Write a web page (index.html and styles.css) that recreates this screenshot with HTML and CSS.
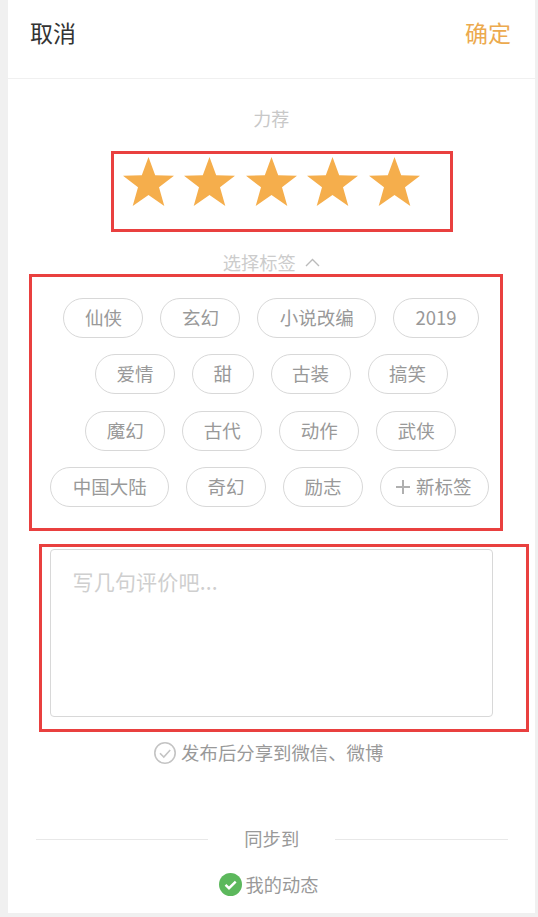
FILE: index.html
```html
<!DOCTYPE html>
<html lang="zh-CN">
<head>
<meta charset="utf-8">
<title>力荐</title>
<link rel="stylesheet" href="styles.css">
</head>
<body>
<main class="card">
  <header class="topbar">
    <span class="cancel">取消</span>
    <span class="confirm">确定</span>
  </header>
  <p class="rating-label">力荐</p>
  <div class="stars">
    <svg class="star" viewBox="0 0 51 49"><path d="M25.5 0L32.2 18.2 51 18.7 36 30.3 41.3 49 25.5 38 9.7 49 15 30.3 0 18.7 18.8 18.2z"/></svg>
    <svg class="star" viewBox="0 0 51 49"><path d="M25.5 0L32.2 18.2 51 18.7 36 30.3 41.3 49 25.5 38 9.7 49 15 30.3 0 18.7 18.8 18.2z"/></svg>
    <svg class="star" viewBox="0 0 51 49"><path d="M25.5 0L32.2 18.2 51 18.7 36 30.3 41.3 49 25.5 38 9.7 49 15 30.3 0 18.7 18.8 18.2z"/></svg>
    <svg class="star" viewBox="0 0 51 49"><path d="M25.5 0L32.2 18.2 51 18.7 36 30.3 41.3 49 25.5 38 9.7 49 15 30.3 0 18.7 18.8 18.2z"/></svg>
    <svg class="star" viewBox="0 0 51 49"><path d="M25.5 0L32.2 18.2 51 18.7 36 30.3 41.3 49 25.5 38 9.7 49 15 30.3 0 18.7 18.8 18.2z"/></svg>
  </div>
  <div class="tag-toggle">
    <span>选择标签</span>
    <svg class="chevron" viewBox="0 0 15 9"><path d="M1 8L7.5 1.5 14 8"/></svg>
  </div>
  <section class="tags">
    <div class="tag-row">
      <span class="tag">仙侠</span><span class="tag">玄幻</span><span class="tag tag-wide">小说改编</span><span class="tag tag-year">2019</span>
    </div>
    <div class="tag-row">
      <span class="tag">爱情</span><span class="tag">甜</span><span class="tag">古装</span><span class="tag">搞笑</span>
    </div>
    <div class="tag-row tag-row-third">
      <span class="tag">魔幻</span><span class="tag">古代</span><span class="tag">动作</span><span class="tag">武侠</span>
    </div>
    <div class="tag-row tag-row-last">
      <span class="tag tag-wide">中国大陆</span><span class="tag">奇幻</span><span class="tag">励志</span>
      <span class="tag tag-new"><svg class="plus" viewBox="0 0 14 14"><path d="M7 0V14M0 7H14"/></svg>新标签</span>
    </div>
  </section>
  <div class="comment">写几句评价吧...</div>
  <div class="share">
    <svg class="tick" viewBox="0 0 22 22"><circle cx="11" cy="11" r="10.2"/><path d="M6 11.2L9.8 15 16.2 8"/></svg>
    <span class="row-text">发布后分享到微信、微博</span>
  </div>
  <div class="sync-title"><span class="rule"></span><span class="sync-text">同步到</span><span class="rule"></span></div>
  <div class="sync-target">
    <svg class="tick-on" viewBox="0 0 23 23"><circle cx="11.5" cy="11.5" r="11.5"/><path d="M6.5 11.8L10 15.2 16.7 8.6"/></svg>
    <span class="row-text">我的动态</span>
  </div>
</main>
<div class="mark mark-stars"></div>
<div class="mark mark-tags"></div>
<div class="mark mark-comment"></div>
</body>
</html>
```
FILE: styles.css
```css
* { box-sizing: border-box; }
html, body { margin: 0; padding: 0; }
body {
  position: relative;
  width: 538px;
  height: 917px;
  overflow: hidden;
  background: #f0f0f0;
  font-family: "Noto Sans CJK SC", "Noto Sans", sans-serif;
  color: #999;
}
.card {
  width: 526.5px;
  height: 913px;
  margin-left: 8px;
  background: #fff;
  overflow: hidden;
}
.topbar {
  display: flex;
  justify-content: space-between;
  align-items: center;
  height: 79px;
  padding: 0 23.5px 14px 22px;
  border-bottom: 1px solid #f0f0f0;
  font-size: 23px;
  line-height: 34px;
}
.cancel { color: #333; }
.confirm { color: #ecaa4e; }
.rating-label {
  margin: 26px 0 0;
  font-size: 18px;
  line-height: 26px;
  text-align: center;
  color: #c8c8c8;
}
.stars {
  display: flex;
  gap: 10.4px;
  margin: 26px 0 0 115px;
}
.star { width: 51px; height: 49px; flex: none; }
.star path { fill: #f5ae4c; }
.tag-toggle {
  display: flex;
  justify-content: center;
  align-items: center;
  gap: 8px;
  margin: 43px 0 0;
  font-size: 18.2px;
  line-height: 26px;
  color: #ccc;
}
.chevron { width: 15px; height: 9px; margin-left: 1px; }
.chevron path { fill: none; stroke: #bbb; stroke-width: 1.4; }
.tags {
  display: flex;
  flex-direction: column;
  gap: 16.4px;
  margin-top: 23px;
}
.tag-row {
  display: flex;
  justify-content: center;
  gap: 17px;
}
.tag-row-third { margin-right: 1px; }
.tag-row-last { margin-right: 3px; }
.tag {
  display: flex;
  align-items: center;
  height: 40px;
  padding: 0 20.5px 2px;
  border: 1px solid #d8d8d8;
  border-radius: 20px;
  font-size: 18.5px;
  color: #999;
}
.tag-wide { padding: 0 21.25px 2px; }
.tag-year { padding: 0 21.5px 2px; }
.tag-new { padding: 0 16.5px 2px 15px; }
.plus { width: 14px; height: 14px; margin: 2px 6px 0 0; }
.plus path { stroke: #b0b0b0; stroke-width: 2; fill: none; }
.comment {
  height: 168.5px;
  margin: 41.5px 41.5px 0 42px;
  padding: 17px 21.5px;
  border: 1px solid #d8d8d8;
  border-radius: 4px;
  font-size: 21px;
  line-height: 28px;
  letter-spacing: 0.2px;
  color: #cfcfcf;
}
.share, .sync-target {
  display: flex;
  justify-content: center;
  align-items: center;
  height: 26px;
  gap: 5px;
  font-size: 18.4px;
  line-height: 26px;
  color: #999;
}
.share { margin: 22.5px 5px 0 0; }
.row-text { margin-top: -2px; }
.tick { width: 22px; height: 22px; }
.tick circle, .tick path { fill: none; stroke: #c4c4c4; stroke-width: 1.6; }
.sync-title {
  display: flex;
  align-items: center;
  gap: 36px;
  height: 26px;
  margin: 61px 27px 0 28px;
  font-size: 18.3px;
  line-height: 26px;
  color: #999;
}
.sync-text { margin-top: -3px; }
.rule { flex: 1; height: 1px; background: #e8e8e8; }
.sync-target { margin: 19px 5.5px 0 0; gap: 4px; font-size: 18.2px; }
.tick-on { width: 23px; height: 23px; }
.tick-on circle { fill: #5cb85c; }
.tick-on path { fill: none; stroke: #fff; stroke-width: 2.4; }
.mark {
  position: absolute;
  border: 3px solid #e9403f;
}
.mark-stars { left: 111px; top: 151px; width: 342px; height: 81px; }
.mark-tags { left: 29px; top: 274px; width: 474px; height: 257px; }
.mark-comment { left: 39px; top: 544px; width: 490px; height: 188px; }
```
